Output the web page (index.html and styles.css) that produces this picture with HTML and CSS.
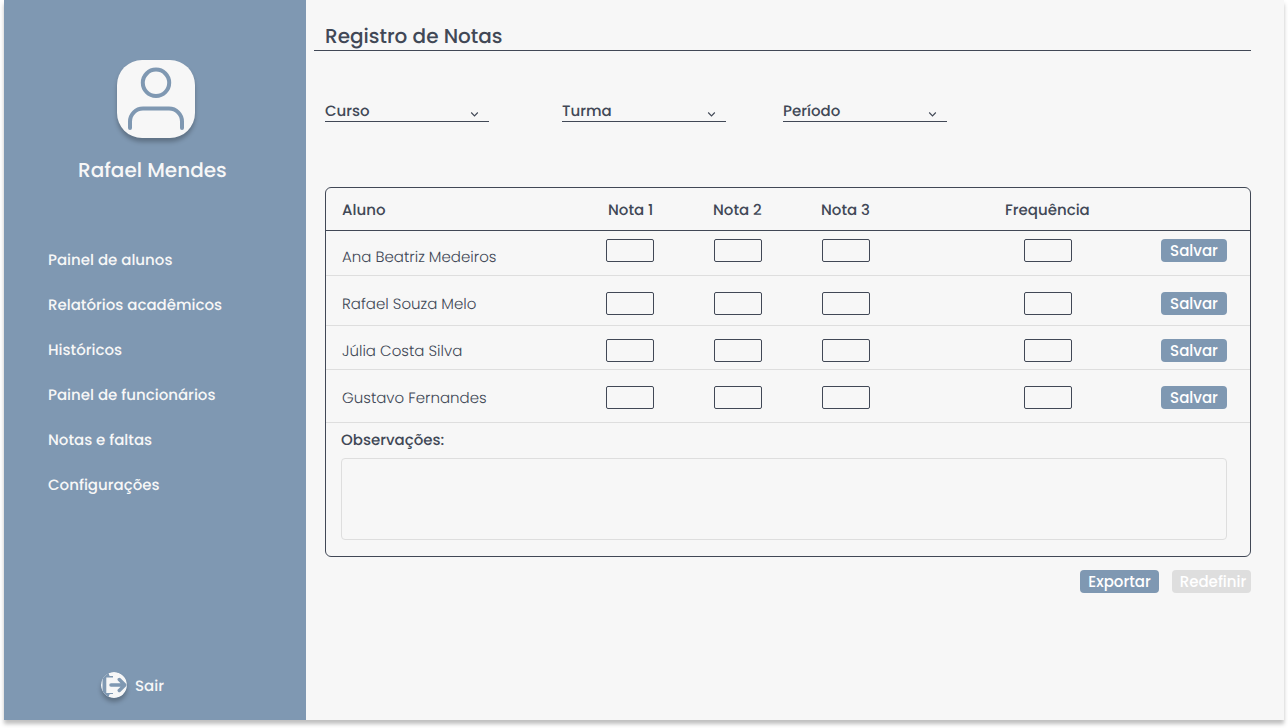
FILE: index.html
```html
<!DOCTYPE html>
<html lang="pt-BR">
<head>
<meta charset="utf-8">
<title>Registro de Notas</title>
<link rel="stylesheet" href="styles.css">
</head>
<body>
<div class="app">
  <aside class="sidebar">
    <div class="avatar">
      <svg width="78" height="78" viewBox="0 0 78 78" fill="none" stroke="#7f98b2" stroke-width="4" stroke-linecap="round"><circle cx="39" cy="22.800" r="13.200"/><path d="M13 68v-6.500a13 13 0 0 1 13-13h26a13 13 0 0 1 13 13v6.500"/></svg>
    </div>
    <div class="user">Rafael Mendes</div>
    <nav class="menu">
      <a>Painel de alunos</a>
      <a>Relatórios acadêmicos</a>
      <a>Históricos</a>
      <a>Painel de funcionários</a>
      <a>Notas e faltas</a>
      <a>Configurações</a>
    </nav>
    <a class="logout">
      <svg class="logout-icon" width="26" height="26" viewBox="0 0 26 26"><defs><clipPath id="disc"><circle cx="13" cy="13" r="13"/></clipPath></defs><g clip-path="url(#disc)"><path fill="#f7f7f7" d="M0 0h26v26H0z"/><path fill="#7f98b2" d="M1.500 0H8v2.500q0 1.500 1.500 1.500h2.500V5.500H5.300v15.500h6.700v1H9.500Q8 22 8 23.500V26H1.500z"/></g><path d="M10 13H23M18.300 7.500l5.500 5.500-5.500 5.500" fill="none" stroke="#7f98b2" stroke-width="3.500" stroke-linecap="round" stroke-linejoin="round"/></svg>
      <span>Sair</span>
    </a>
  </aside>
  <main class="content">
    <h1 class="title">Registro de Notas</h1>
    <div class="filters">
      <div class="select"><span>Curso</span><svg width="9" height="7" viewBox="0 0 9 7"><path d="M1.200 1.500 4.500 5l3.300-3.500"/></svg></div>
      <div class="select"><span>Turma</span><svg width="9" height="7" viewBox="0 0 9 7"><path d="M1.200 1.500 4.500 5l3.300-3.500"/></svg></div>
      <div class="select"><span>Período</span><svg width="9" height="7" viewBox="0 0 9 7"><path d="M1.200 1.500 4.500 5l3.300-3.500"/></svg></div>
    </div>
    <section class="card">
      <div class="row head"><span>Aluno</span><span class="hn">Nota 1</span><span class="n2">Nota 2</span><span class="n2">Nota 3</span><span class="hf">Frequência</span></div>
      <div class="row r1"><span class="name">Ana Beatriz Medeiros</span><input><input><input><input><button class="btn">Salvar</button></div>
      <div class="row r2"><span class="name">Rafael Souza Melo</span><input><input><input><input><button class="btn">Salvar</button></div>
      <div class="row r3"><span class="name">Júlia Costa Silva</span><input><input><input><input><button class="btn">Salvar</button></div>
      <div class="row r4"><span class="name">Gustavo Fernandes</span><input><input><input><input><button class="btn">Salvar</button></div>
      <div class="notes"><label>Observações:</label><textarea></textarea></div>
    </section>
    <div class="actions"><button class="btn">Exportar</button><button class="btn reset">Redefinir</button></div>
  </main>
</div>
</body>
</html>
```

FILE: styles.css
```css
* { box-sizing: border-box; }
body { margin: 0; min-height: 728px; background: #fff; font: 500 15px/22px Poppins, Inter, sans-serif; color: #414856; text-rendering: geometricPrecision; }
.app { display: flex; width: 1280px; height: 720px; margin: 0 4px; background: #f7f7f7; box-shadow: 0 4px 4px rgba(0,0,0,.25); }
.sidebar { width: 302px; background: #7f98b2; color: #f7f7f7; display: flex; flex-direction: column; padding-top: 60px; }
.avatar { width: 78px; height: 78px; margin-left: 113px; border-radius: 25px; background: #f7f7f7; box-shadow: 0 4px 4px rgba(0,0,0,.25); }
.avatar svg { display: block; }
.user { margin: 17px 0 0 74px; font-size: 20px; line-height: 30px; white-space: nowrap; }
.menu { display: flex; flex-direction: column; gap: 23px; margin: 65px 0 0 44px; white-space: nowrap; }
.menu a { align-self: flex-start; }
.logout { display: flex; align-items: flex-start; gap: 8px; height: 26px; margin: auto 0 22px 97px; }
.logout span { padding-top: 4px; }
.logout-icon { border-radius: 50%; box-shadow: 0 4px 4px rgba(0,0,0,.25); }
.content { width: 978px; }
.title { width: 937px; height: 51px; margin: 0 0 0 8px; padding: 21px 0 0 11px; border-bottom: 1px solid #414856; font-size: 20px; font-weight: 500; line-height: 30px; }
.filters { display: flex; margin: 48px 0 0 19px; }
.select { display: flex; justify-content: space-between; width: 164px; height: 23px; padding-right: 10px; border-bottom: 1px solid #414856; margin-right: 73px; }
.select span { padding-top: 2px; line-height: 20px; margin-top: 1px; }
.select + .select { margin-right: 57px; }
.select svg { margin-top: 12px; fill: none; stroke: #414856; stroke-width: 1.1; }
.card { width: 926px; height: 370px; margin: 65px 0 0 19px; border: 1px solid #414856; border-radius: 6px; }
.row { display: grid; grid-template-columns: 264px 108px 108px 202px 137px 66px; padding-left: 16px; align-items: start; border-bottom: 1px solid #dedede; white-space: nowrap; }
.row.head { height: 43px; padding-top: 12px; border-color: #414856; }
.hn { padding-left: 2px; }
.n2 { margin-left: -1px; }
.hf { margin-left: -19px; }
.row.r1 { height: 45px; padding-top: 8px; }
.row.r2 { height: 50px; padding-top: 16px; }
.row.r3 { height: 44px; padding-top: 13px; }
.row.r4 { height: 53px; padding-top: 16px; }
.name { font-weight: 300; margin-top: 2px; }
.r1 .name { margin-top: 8px; }
.row input { width: 48px; height: 23px; border: 1px solid #414856; border-radius: 2px; background: transparent; padding: 0; }
.btn { height: 23px; padding: 1px 0 0; border: 0; border-radius: 4px; background: #7f98b2; color: #fff; font: inherit; line-height: 22px; white-space: nowrap; }
.notes { display: flex; flex-direction: column; padding: 7px 0 0 15px; }
textarea { width: 886px; height: 82px; margin-top: 6px; border: 1px solid #dedede; border-radius: 4px; background: transparent; resize: none; }
.actions { display: flex; gap: 13px; margin: 13px 33px 0 0; justify-content: flex-end; }
.actions .btn { width: 79px; }
.btn.reset { background: #dedede; padding-left: 3px; }
```
